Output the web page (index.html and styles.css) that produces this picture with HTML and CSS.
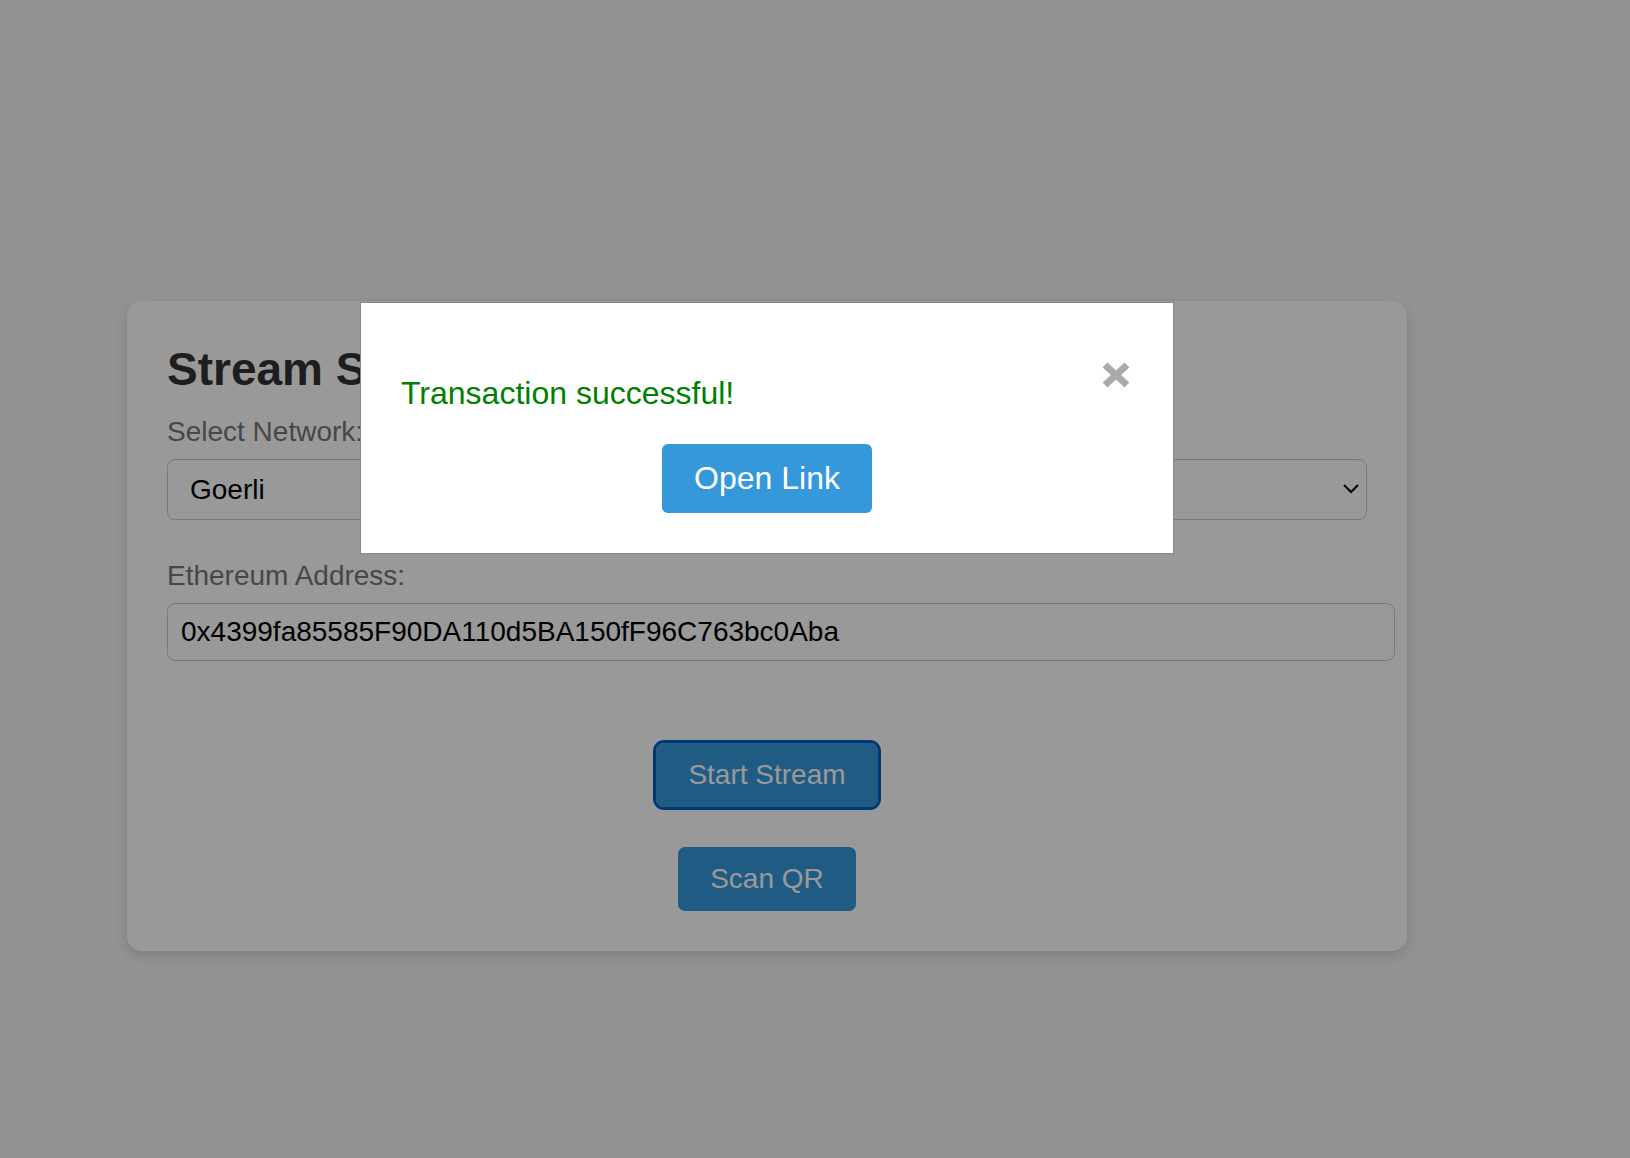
FILE: index.html
```html
<!DOCTYPE html>
<html lang="en">
<head>
<meta charset="utf-8">
<title>Stream</title>
<link rel="stylesheet" href="styles.css">
</head>
<body>
  <main class="card">
    <h2 class="title">Stream Salary</h2>
    <label class="field-label" for="network">Select Network:</label>
    <div class="select-wrap">
      <select id="network" class="select">
        <option>Goerli</option>
      </select>
      <svg class="chevron" width="16" height="10" viewBox="0 0 16 10"><polyline points="1,1 8,8 15,1" fill="none" stroke="#000" stroke-width="2"/></svg>
    </div>
    <label class="field-label" for="addr">Ethereum Address:</label>
    <input id="addr" class="text-input" type="text" value="0x4399fa85585F90DA110d5BA150fF96C763bc0Aba">
    <div class="actions">
      <button class="btn btn-focus">Start Stream</button>
      <button class="btn">Scan QR</button>
    </div>
  </main>

  <div class="overlay">
    <div class="modal">
      <svg class="close" width="30" height="28" viewBox="0 0 30 28"><path d="M4 4 L26 24 M26 4 L4 24" stroke="#aaa" stroke-width="7" fill="none"/></svg>
      <p class="message">Transaction successful!</p>
      <button class="btn btn-big">Open Link</button>
    </div>
  </div>
</body>
</html>
```
FILE: styles.css
```css
* { box-sizing: border-box; }

html, body {
  margin: 0;
  height: 100%;
}

body {
  background: #f5f5f5;
  font-family: "Liberation Sans", Arial, Helvetica, sans-serif;
  padding: 301px 0 0 127px;
  overflow: hidden;
}

.card {
  width: 1280px;
  background: #fff;
  border-radius: 15px;
  padding: 41px 40px 40px 40px;
  box-shadow: 0 5px 14px rgba(0, 0, 0, 0.14);
  display: flex;
  flex-direction: column;
}

.title {
  margin: 0 0 20px;
  font-size: 46px;
  font-weight: bold;
  color: #333;
  white-space: nowrap;
}

.field-label {
  display: block;
  font-size: 28px;
  color: #777;
  margin-bottom: 11px;
}

.select-wrap {
  position: relative;
  width: 100%;
  margin-bottom: 40px;
}

.select {
  appearance: none;
  -webkit-appearance: none;
  width: 100%;
  height: 61px;
  padding: 0 22px;
  font-family: inherit;
  font-size: 28px;
  color: #000;
  background: #fff;
  border: 1px solid #ccc;
  border-radius: 8px;
}

.chevron {
  position: absolute;
  right: 8px;
  top: 25px;
}

.text-input {
  box-sizing: content-box;
  width: 1200px;
  padding: 12px 13px 12px 13px;
  font-family: inherit;
  font-size: 28px;
  color: #000;
  border: 1px solid #ccc;
  border-radius: 8px;
  background: #fff;
  margin: 0 0 82px;
}

.actions {
  display: flex;
  flex-direction: column;
  align-items: center;
  gap: 40px;
}

.btn {
  background: #3498db;
  color: #fff;
  border: none;
  border-radius: 7px;
  padding: 16px 32px;
  font-family: inherit;
  font-size: 28px;
  line-height: normal;
  cursor: pointer;
}

.btn-focus {
  outline: 3px solid #005fcc;
  outline-offset: 0;
  border-radius: 8px;
}

.overlay {
  position: fixed;
  inset: 0;
  background: rgba(0, 0, 0, 0.4);
  padding: 302px 0 0 360px;
}

.modal {
  position: relative;
  width: 814px;
  background: #fff;
  border: 1px solid #888;
  padding: 40px;
  display: flex;
  flex-direction: column;
}

.close {
  position: absolute;
  top: 58px;
  right: 42px;
}

.message {
  margin: 32px 0 0;
  font-size: 32px;
  color: #008000;
}

.btn-big {
  align-self: center;
  margin-top: 32px;
  font-size: 32px;
  border-radius: 6px;
}
```
